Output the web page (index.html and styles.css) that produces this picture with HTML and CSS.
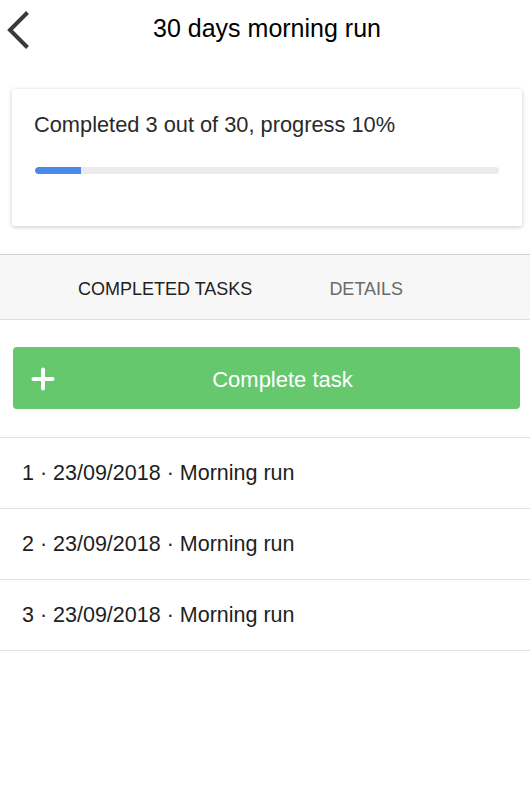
FILE: index.html
```html
<!DOCTYPE html>
<html lang="en">
<head>
<meta charset="utf-8">
<title>30 days morning run</title>
<link rel="stylesheet" href="styles.css">
</head>
<body>
<header class="topbar">
  <button class="back" aria-label="Back">
    <svg width="36" height="56" viewBox="0 0 36 56" aria-hidden="true">
      <path d="M27.5 12.5 L10 30 L27.5 47.5" fill="none" stroke="#3a3a3a" stroke-width="4"/>
    </svg>
  </button>
  <h1 class="title">30 days morning run</h1>
  <span class="spacer"></span>
</header>

<section class="card">
  <p class="progress-text">Completed 3 out of 30, progress 10%</p>
  <div class="track"><div class="fill" style="width:10%"></div></div>
</section>

<nav class="tabs">
  <span class="tab active">COMPLETED TASKS</span>
  <span class="tab">DETAILS</span>
</nav>

<button class="complete-btn">
  <svg class="plus" width="24" height="24" viewBox="0 0 24 24" aria-hidden="true">
    <path d="M12 2.5 V21.5 M2.5 12 H21.5" stroke="#fff" stroke-width="4" stroke-linecap="round"/>
  </svg>
  <span class="btn-label">Complete task</span>
</button>

<ul class="tasks">
  <li class="task">1 · 23/09/2018 · Morning run</li>
  <li class="task">2 · 23/09/2018 · Morning run</li>
  <li class="task">3 · 23/09/2018 · Morning run</li>
</ul>
</body>
</html>
```
FILE: styles.css
```css
* { box-sizing: border-box; }

html, body {
  margin: 0;
  padding: 0;
  background: #ffffff;
  font-family: "Liberation Sans", Arial, sans-serif;
  color: #222;
}

.topbar {
  display: grid;
  grid-template-columns: 60px 1fr 60px;
  align-items: center;
  height: 56px;
}

.back {
  border: 0;
  background: none;
  padding: 0;
  margin: 0;
  height: 56px;
  display: flex;
  align-items: flex-start;
  cursor: pointer;
}

.back svg { display: block; }

.title {
  margin: 0;
  padding-left: 4px;
  text-align: center;
  font-size: 25px;
  font-weight: normal;
  color: #000;
  white-space: nowrap;
}

.card {
  margin: 33px 8px 0 12px;
  padding: 24px 23px 52px 23px;
  background: #fff;
  border-radius: 2px;
  box-shadow: 0 1px 4px rgba(0, 0, 0, 0.22);
}

.progress-text {
  margin: 0 0 30px -1px;
  font-size: 21.8px;
  line-height: 24px;
  color: #2a2a2a;
}

.track {
  height: 7px;
  border-radius: 4px;
  background: #ebebeb;
  overflow: hidden;
}

.fill {
  height: 100%;
  background: #4a89ea;
  border-radius: 4px 0 0 4px;
}

.tabs {
  margin-top: 28px;
  height: 66px;
  display: flex;
  justify-content: flex-start;
  align-items: center;
  gap: 77px;
  padding: 4px 0 0 78px;
  background: #f7f7f7;
  border-top: 1px solid #d2d2d2;
  border-bottom: 1px solid #e0e0e0;
}

.tab {
  font-size: 18px;
  color: #6a6a6a;
}

.tab.active { color: #222; }

.complete-btn {
  display: flex;
  align-items: center;
  width: calc(100% - 23px);
  height: 62px;
  margin: 27px 10px 0 13px;
  padding: 2px 10px 0 18px;
  border: 0;
  border-radius: 4px;
  background: #66c86d;
  color: #fff;
  font-family: inherit;
  cursor: pointer;
}

.plus { display: block; flex: none; margin-top: -1px; }

.btn-label {
  flex: 1;
  text-align: center;
  font-size: 22px;
  padding-top: 1px;
}

.tasks {
  list-style: none;
  margin: 28px 0 0 0;
  padding: 0;
  border-top: 1px solid #e0e0e0;
}

.task {
  height: 71px;
  line-height: 71px;
  padding-left: 22px;
  font-size: 21.5px;
  color: #1e1e1e;
  border-bottom: 1px solid #e0e0e0;
}
```
